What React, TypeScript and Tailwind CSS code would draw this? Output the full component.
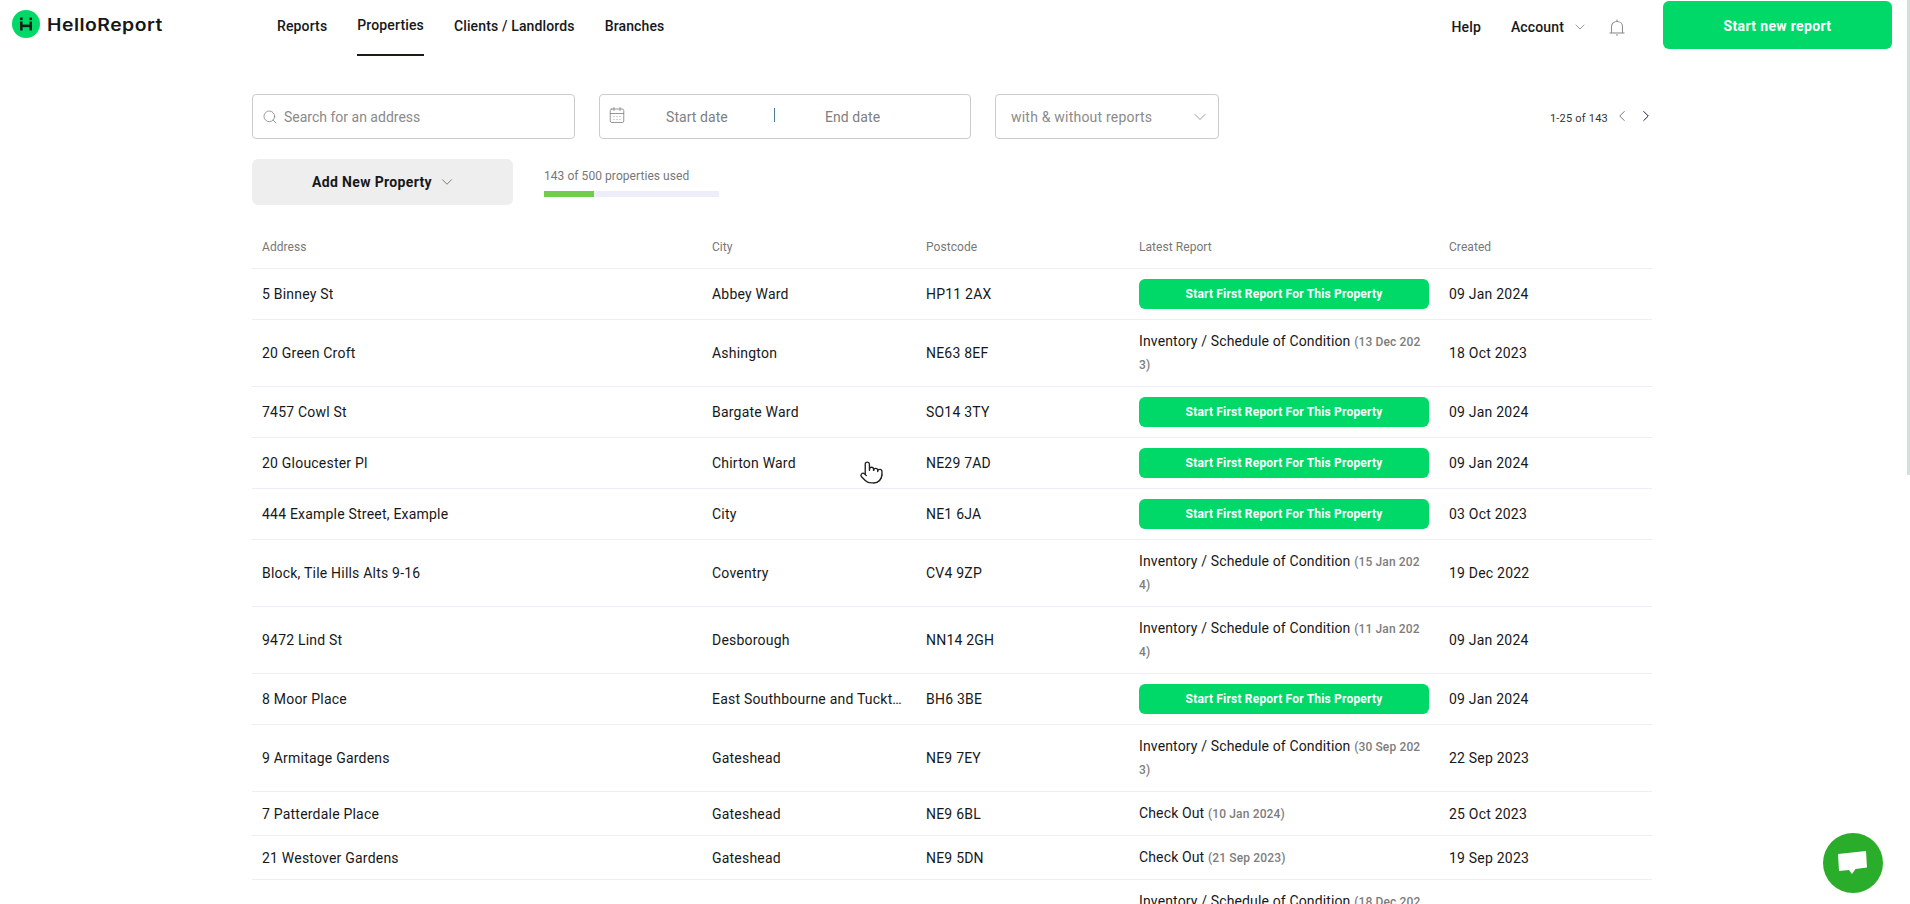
import { CalendarDays, ChevronDown, ChevronLeft, ChevronRight, Pointer, Search } from 'lucide-react';

type Row = {
  address: string;
  city: string;
  postcode: string;
  report?: string;
  date?: string;
  created: string;
};

const rows: Row[] = [
  { address: '5 Binney St', city: 'Abbey Ward', postcode: 'HP11 2AX', created: '09 Jan 2024' },
  { address: '20 Green Croft', city: 'Ashington', postcode: 'NE63 8EF', report: 'Inventory / Schedule of Condition', date: '(13 Dec 2023)', created: '18 Oct 2023' },
  { address: '7457 Cowl St', city: 'Bargate Ward', postcode: 'SO14 3TY', created: '09 Jan 2024' },
  { address: '20 Gloucester Pl', city: 'Chirton Ward', postcode: 'NE29 7AD', created: '09 Jan 2024' },
  { address: '444 Example Street, Example', city: 'City', postcode: 'NE1 6JA', created: '03 Oct 2023' },
  { address: 'Block, Tile Hills Alts 9-16', city: 'Coventry', postcode: 'CV4 9ZP', report: 'Inventory / Schedule of Condition', date: '(15 Jan 2024)', created: '19 Dec 2022' },
  { address: '9472 Lind St', city: 'Desborough', postcode: 'NN14 2GH', report: 'Inventory / Schedule of Condition', date: '(11 Jan 2024)', created: '09 Jan 2024' },
  { address: '8 Moor Place', city: 'East Southbourne and Tuckton Ward', postcode: 'BH6 3BE', created: '09 Jan 2024' },
  { address: '9 Armitage Gardens', city: 'Gateshead', postcode: 'NE9 7EY', report: 'Inventory / Schedule of Condition', date: '(30 Sep 2023)', created: '22 Sep 2023' },
  { address: '7 Patterdale Place', city: 'Gateshead', postcode: 'NE9 6BL', report: 'Check Out', date: '(10 Jan 2024)', created: '25 Oct 2023' },
  { address: '21 Westover Gardens', city: 'Gateshead', postcode: 'NE9 5DN', report: 'Check Out', date: '(21 Sep 2023)', created: '19 Sep 2023' },
  { address: '3 Kells Gardens', city: 'Gateshead', postcode: 'NE9 5XR', report: 'Inventory / Schedule of Condition', date: '(18 Dec 2023)', created: '12 Sep 2023' },
];

function Logo() {
  return (
    <div className="flex items-center gap-[7px]">
      <svg width="28" height="28" viewBox="0 0 28 28">
        <circle cx="14" cy="14" r="14" fill="#00d968" />
        <rect x="8" y="7.500" width="2.600" height="2.600" fill="#10201a" />
        <rect x="17.400" y="7.500" width="2.600" height="2.600" fill="#10201a" />
        <rect x="8" y="11.500" width="2.600" height="9" fill="#10201a" />
        <rect x="17.400" y="11.500" width="2.600" height="9" fill="#10201a" />
        <rect x="8" y="14.600" width="12" height="2.600" fill="#10201a" />
      </svg>
      <span className="mt-[2px] origin-left scale-x-[1.14] font-['Inter',sans-serif] text-[17px] font-semibold leading-none tracking-[0.025em] text-[#14181a]">HelloReport</span>
    </div>
  );
}

function BellIcon() {
  return (
    <svg width="16" height="17" viewBox="0 0 16 17" fill="none" stroke="#8d9196" strokeWidth="1.1">
      <path d="M0.500 14h15" />
      <path d="M2.500 14V7.500C2.500 4.500 5 2.500 8 2.500s5.500 2 5.500 5V14" />
      <path d="M8 0.500v2" />
      <path d="M7 16h2" />
    </svg>
  );
}

export default function App() {
  return (
    <div className="relative h-[904px] w-full overflow-hidden bg-white font-['Roboto',sans-serif] text-[14px] tracking-[0.015em] text-[#16181a]">
      <header className="flex h-[56px] items-start pl-3 pr-[18px]">
        <div className="mt-[10px] w-[265px]">
          <Logo />
        </div>
        <nav className="flex gap-[30px] font-medium tracking-[0.01em]">
          <a className="flex h-[53px] items-center">Reports</a>
          <a className="flex h-[56px] items-center border-b-2 border-[#1c1c14] pb-[3px]">Properties</a>
          <a className="flex h-[53px] items-center">Clients / Landlords</a>
          <a className="flex h-[53px] items-center">Branches</a>
        </nav>
        <div className="ml-auto flex h-[54px] items-center font-medium tracking-[0.01em]">
          <a>Help</a>
          <a className="ml-[30px]">Account</a>
          <ChevronDown className="ml-[8px] h-[16px] w-[16px] text-[#666]" strokeWidth={1} />
          <span className="ml-[21px] mr-[38px]">
            <BellIcon />
          </span>
        </div>
        <button className="mt-px h-[48px] w-[229px] rounded-md bg-[#00d968] pt-0.5 font-bold tracking-[0.025em] text-white">Start new report</button>
      </header>

      <main className="mx-auto w-[1400px] -translate-x-[3px]">
        <div className="mt-[38px] flex h-[45px] items-center">
          <div className="flex h-full w-[323px] items-center rounded border border-[#ccc] pl-[9px]">
            <Search className="h-[16px] w-[16px] text-[#777]" strokeWidth={1.1} />
            <span className="ml-[6px] pt-0.5 tracking-normal text-[#8a8a8a]">Search for an address</span>
          </div>
          <div className="ml-6 flex h-full w-[372px] items-center rounded border border-[#ccc] pl-[8px] text-[#808080]">
            <CalendarDays className="mb-1 h-[18px] w-[18px] text-[#777]" strokeWidth={1} />
            <span className="ml-[40px] w-[108px] pt-0.5 tracking-[0.005em]">Start date</span>
            <span className="mb-1 h-[14px] w-px bg-[#4a7d9c]" />
            <span className="ml-[50px] pt-0.5 tracking-[0.005em]">End date</span>
          </div>
          <div className="ml-6 flex h-full w-[224px] items-center justify-between rounded border border-[#ccc] pl-[15px] pr-[8px] text-[#8a8a8a]">
            <span className="pt-0.5">with &amp; without reports</span>
            <ChevronDown className="h-[20px] w-[20px] text-[#888]" strokeWidth={1} />
          </div>
          <div className="-mr-[3px] ml-auto flex items-center text-[11px] tracking-[0.02em] text-[#333]">
            <span className="mt-[6px]">1-25 of 143</span>
            <ChevronLeft className="mb-[1px] ml-[5px] h-[18px] w-[18px] text-[#5f6b7a]" strokeWidth={1.2} />
            <ChevronRight className="mb-[1px] ml-[6px] h-[18px] w-[18px] text-[#10163a]" strokeWidth={1.3} />
          </div>
        </div>

        <div className="mt-5 flex items-start">
          <button className="flex h-[46px] w-[261px] items-center justify-center rounded-md bg-[#eeeeee] pl-[3px] font-bold tracking-[0.025em]">
            Add New Property
            <ChevronDown className="ml-[6px] h-[18px] w-[18px] text-[#555]" strokeWidth={1} />
          </button>
          <div className="ml-[31px] mt-[9px] w-[175px]">
            <p className="text-[12px] leading-4 tracking-[0.005em] text-[#777]">143 of 500 properties used</p>
            <div className="mt-[7px] h-[6px] bg-[#eeeefb]">
              <div className="h-full w-[50px] bg-[#6fcf4a]" />
            </div>
          </div>
        </div>

        <table className="mt-[21px] w-full table-fixed">
          <colgroup>
            <col className="w-[450px]" />
            <col className="w-[214px]" />
            <col className="w-[213px]" />
            <col className="w-[310px]" />
            <col className="w-[213px]" />
          </colgroup>
          <thead>
            <tr className="h-[42px] text-left text-[12px] tracking-[0.005em] text-[#777]">
              <th className="border-b border-[#eeeefb] px-[10px] font-normal">Address</th>
              <th className="border-b border-[#eeeefb] px-[10px] font-normal">City</th>
              <th className="border-b border-[#eeeefb] px-[10px] font-normal">Postcode</th>
              <th className="border-b border-[#eeeefb] px-[10px] font-normal">Latest Report</th>
              <th className="border-b border-[#eeeefb] px-[10px] font-normal">Created</th>
            </tr>
          </thead>
          <tbody className="leading-[23px]">
            {rows.map((row) => (
              <tr key={row.address}>
                <td className="border-b border-[#eeeefb] px-[10px] pb-[9px] pt-[11px]">{row.address}</td>
                <td className="truncate border-b border-[#eeeefb] px-[10px] pb-[9px] pt-[11px]">{row.city}</td>
                <td className="border-b border-[#eeeefb] px-[10px] pb-[9px] pt-[11px]">{row.postcode}</td>
                <td className={row.report ? 'break-all border-b border-[#eeeefb] px-[10px] py-[10px] tracking-[0.01em]' : 'border-b border-[#eeeefb] p-[10px]'}>
                  {row.report ? (
                    <>
                      {row.report} <span className="text-[12px] font-medium leading-none text-[#7d7d7d]">{row.date}</span>
                    </>
                  ) : (
                    <button className="block h-[30px] w-full rounded-md bg-[#00d968] text-[12px] font-bold leading-none tracking-[0.016em] text-white">Start First Report For This Property</button>
                  )}
                </td>
                <td className="border-b border-[#eeeefb] px-[10px] pb-[9px] pt-[11px]">{row.created}</td>
              </tr>
            ))}
          </tbody>
        </table>
      </main>

      {/* scrollbar thumb, hand cursor and chat bubble sit over the page */}
      <div className="absolute right-0 top-0 h-[475px] w-[3px] bg-[#d3e0dc]" />
      <Pointer className="absolute left-[859px] top-[460px] h-[25px] w-[25px] fill-white text-[#222]" strokeWidth={1.3} />
      <button className="absolute left-[1823px] top-[833px] flex h-[60px] w-[60px] items-center justify-center rounded-full bg-[#2aad2a]">
        <svg width="32" height="26" viewBox="0 0 32 26">
          <polygon points="1,4 29,1 30,17.500 18.500,19 15,24 12,20 2,21" fill="#fff" />
        </svg>
      </button>
    </div>
  );
}
